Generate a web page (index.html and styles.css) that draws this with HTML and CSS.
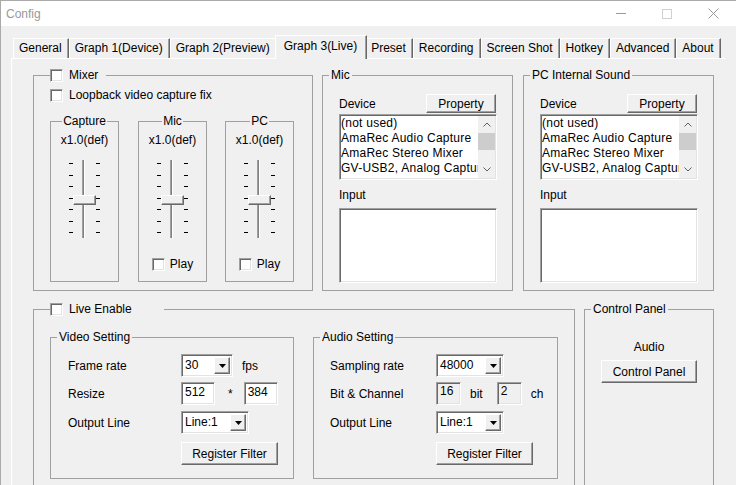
FILE: index.html
```html
<!DOCTYPE html>
<html lang="en">

<head>
  <meta charset="UTF-8">
  <title>Config</title>
  <link rel="stylesheet" href="styles.css">
</head>

<body>
  <div class="window">

    <div class="titlebar">
      <span class="title">Config</span>
      <span class="caption-btn"><svg width="10" height="1" viewBox="0 0 10 1"><rect width="10" height="1" fill="#999"/></svg></span>
      <span class="caption-btn"><svg width="10" height="10" viewBox="0 0 10 10"><rect x="0.5" y="0.5" width="9" height="9" fill="none" stroke="#d0d0d0"/></svg></span>
      <span class="caption-btn"><svg width="11" height="11" viewBox="0 0 11 11"><path d="M0.5 0.5L10.5 10.5M10.5 0.5L0.5 10.5" stroke="#999"/></svg></span>
    </div>

    <div class="client">
      <div class="tabs">
        <div class="tab">General</div>
        <div class="tab">Graph 1(Device)</div>
        <div class="tab">Graph 2(Preview)</div>
        <div class="tab active">Graph 3(Live)</div>
        <div class="tab">Preset</div>
        <div class="tab">Recording</div>
        <div class="tab">Screen Shot</div>
        <div class="tab">Hotkey</div>
        <div class="tab">Advanced</div>
        <div class="tab">About</div>
      </div>

      <div class="page">

        <div class="row-top">
          <fieldset class="group mixer">
            <legend class="check-legend">
              <label class="check-row"><input type="checkbox" class="check"> Mixer</label>
            </legend>
            <div class="mixer-body">
              <label class="check-row"><input type="checkbox" class="check"> Loopback video capture fix</label>

              <div class="faders">
                <fieldset class="group sub">
                  <legend class="sub-legend">Capture</legend>
                  <div class="gain">x1.0(def)</div>
                  <div class="slider">
                    <div class="ticks"><i></i><i></i><i></i><i></i><i></i><i></i><i></i></div>
                    <div class="track"></div>
                    <div class="ticks"><i></i><i></i><i></i><i></i><i></i><i></i><i></i></div>
                    <div class="thumb"></div>
                  </div>
                </fieldset>

                <fieldset class="group sub fader-mic">
                  <legend class="sub-legend">Mic</legend>
                  <div class="gain">x1.0(def)</div>
                  <div class="slider">
                    <div class="ticks"><i></i><i></i><i></i><i></i><i></i><i></i><i></i></div>
                    <div class="track"></div>
                    <div class="ticks"><i></i><i></i><i></i><i></i><i></i><i></i><i></i></div>
                    <div class="thumb"></div>
                  </div>
                  <label class="check-row play"><input type="checkbox" class="check"> Play</label>
                </fieldset>

                <fieldset class="group sub">
                  <legend class="sub-legend">PC</legend>
                  <div class="gain">x1.0(def)</div>
                  <div class="slider">
                    <div class="ticks"><i></i><i></i><i></i><i></i><i></i><i></i><i></i></div>
                    <div class="track"></div>
                    <div class="ticks"><i></i><i></i><i></i><i></i><i></i><i></i><i></i></div>
                    <div class="thumb"></div>
                  </div>
                  <label class="check-row play"><input type="checkbox" class="check"> Play</label>
                </fieldset>
              </div>
            </div>
          </fieldset>

          <fieldset class="group device">
            <legend>Mic</legend>
            <div class="device-body">
              <div class="device-head">
                <span>Device</span>
                <button class="btn property">Property</button>
              </div>
              <div class="listbox">
                <div class="items">
                  <div>(not used)</div>
                  <div>AmaRec Audio Capture</div>
                  <div>AmaRec Stereo Mixer</div>
                  <div>GV-USB2, Analog Capture</div>
                </div>
                <div class="scrollbar">
                  <div class="sb-arrow"><svg width="8" height="5" viewBox="0 0 8 5"><path d="M0.5 4.5L4 1L7.5 4.5" fill="none" stroke="#606060"/></svg></div>
                  <div class="sb-thumb"></div>
                  <div class="sb-track"></div>
                  <div class="sb-arrow"><svg width="8" height="5" viewBox="0 0 8 5"><path d="M0.5 0.5L4 4L7.5 0.5" fill="none" stroke="#606060"/></svg></div>
                </div>
              </div>
              <div class="input-label">Input</div>
              <div class="input-list"></div>
            </div>
          </fieldset>

          <fieldset class="group device">
            <legend>PC Internal Sound</legend>
            <div class="device-body">
              <div class="device-head">
                <span>Device</span>
                <button class="btn property">Property</button>
              </div>
              <div class="listbox">
                <div class="items">
                  <div>(not used)</div>
                  <div>AmaRec Audio Capture</div>
                  <div>AmaRec Stereo Mixer</div>
                  <div>GV-USB2, Analog Capture</div>
                </div>
                <div class="scrollbar">
                  <div class="sb-arrow"><svg width="8" height="5" viewBox="0 0 8 5"><path d="M0.5 4.5L4 1L7.5 4.5" fill="none" stroke="#606060"/></svg></div>
                  <div class="sb-thumb"></div>
                  <div class="sb-track"></div>
                  <div class="sb-arrow"><svg width="8" height="5" viewBox="0 0 8 5"><path d="M0.5 0.5L4 4L7.5 0.5" fill="none" stroke="#606060"/></svg></div>
                </div>
              </div>
              <div class="input-label">Input</div>
              <div class="input-list"></div>
            </div>
          </fieldset>
        </div>

        <div class="row-bottom">
          <fieldset class="group live">
            <legend class="check-legend live-legend">
              <label class="check-row"><input type="checkbox" class="check"> <span class="live-text">Live Enable</span></label>
            </legend>
            <div class="live-body">
              <fieldset class="group setting video">
                <legend>Video Setting</legend>
                <div class="setting-body">
                  <div class="field">
                    <span class="field-label">Frame rate</span>
                    <div class="combo small">
                      <span class="combo-value">30</span>
                      <span class="combo-btn"><svg width="7" height="4" viewBox="0 0 7 4"><path d="M0 0H7L3.5 4Z" fill="#000"/></svg></span>
                    </div>
                    <span class="unit">fps</span>
                  </div>
                  <div class="field">
                    <span class="field-label">Resize</span>
                    <span class="edit">512</span>
                    <span class="unit star">*</span>
                    <span class="edit second">384</span>
                  </div>
                  <div class="field third">
                    <span class="field-label">Output Line</span>
                    <div class="combo">
                      <span class="combo-value">Line:1</span>
                      <span class="combo-btn"><svg width="7" height="4" viewBox="0 0 7 4"><path d="M0 0H7L3.5 4Z" fill="#000"/></svg></span>
                    </div>
                  </div>
                  <div class="field last">
                    <span class="field-label"></span>
                    <button class="btn register">Register Filter</button>
                  </div>
                </div>
              </fieldset>

              <fieldset class="group setting audio">
                <legend>Audio Setting</legend>
                <div class="setting-body">
                  <div class="field">
                    <span class="field-label">Sampling rate</span>
                    <div class="combo">
                      <span class="combo-value">48000</span>
                      <span class="combo-btn"><svg width="7" height="4" viewBox="0 0 7 4"><path d="M0 0H7L3.5 4Z" fill="#000"/></svg></span>
                    </div>
                  </div>
                  <div class="field">
                    <span class="field-label">Bit &amp; Channel</span>
                    <span class="edit readonly">16</span>
                    <span class="unit">bit</span>
                    <span class="edit readonly channels">2</span>
                    <span class="unit">ch</span>
                  </div>
                  <div class="field third">
                    <span class="field-label">Output Line</span>
                    <div class="combo">
                      <span class="combo-value">Line:1</span>
                      <span class="combo-btn"><svg width="7" height="4" viewBox="0 0 7 4"><path d="M0 0H7L3.5 4Z" fill="#000"/></svg></span>
                    </div>
                  </div>
                  <div class="field last">
                    <span class="field-label"></span>
                    <button class="btn register">Register Filter</button>
                  </div>
                </div>
              </fieldset>
            </div>
          </fieldset>

          <fieldset class="group control">
            <legend>Control Panel</legend>
            <div class="control-body">
              <div>Audio</div>
              <button class="btn control-btn">Control Panel</button>
            </div>
          </fieldset>
        </div>

      </div>
    </div>
  </div>
</body>

</html>
```

FILE: styles.css
```css
* {
  box-sizing: border-box;
}

body {
  margin: 0;
  font-family: "Liberation Sans", Arial, sans-serif;
  font-size: 12px;
  line-height: 14px;
  color: #000;
  background: #fff;
}

.window {
  width: 736px;
  height: 485px;
  overflow: hidden;
  display: flex;
  flex-direction: column;
  border-top: 1px solid #aaa;
  border-left: 1px solid #aaa;
  background: #f0f0f0;
}

/* title bar */
.titlebar {
  height: 25px;
  flex: none;
  display: flex;
  align-items: center;
  background: #fff;
}

.title {
  flex: 1;
  padding-left: 5px;
  color: #999;
}

.caption-btn {
  width: 46px;
  height: 25px;
  display: flex;
  align-items: center;
  justify-content: center;
}

/* tabs */
.client {
  flex: 1;
  display: flex;
  flex-direction: column;
  padding-top: 9px;
}

.tabs {
  display: flex;
  align-items: flex-end;
  height: 23px;
  padding-left: 12px;
}

.tab {
  height: 20px;
  padding: 0 6px 0 5px;
  line-height: 19px;
  white-space: nowrap;
  border-top: 1px solid #fff;
  border-left: 1px solid #fff;
  border-right: 1px solid #696969;
  box-shadow: inset -1px 0 #a0a0a0;
}

.tab.active {
  height: 24px;
  margin: 0 -2px -1px;
  padding: 0 9px 0 8px;
  line-height: 20px;
  background: #f0f0f0;
  position: relative;
  z-index: 1;
}

.page {
  flex: 1;
  width: 714px;
  margin-left: 10px;
  padding: 9px 0 0 21px;
  border-top: 1px solid #fff;
  border-left: 1px solid #fff;
}

/* group boxes */
fieldset {
  margin: 0;
  padding: 0;
  min-width: 0;
  border: 1px solid #a0a0a0;
}

legend {
  height: 14px;
  margin-left: 6px;
  padding: 0 2px;
  line-height: 14px;
}

.row-top {
  display: flex;
  gap: 9px;
}

.mixer {
  width: 280px;
  height: 223px;
}

.device {
  width: 191px;
  height: 223px;
}

.device + .device {
  margin-left: 1px;
}

.check-row {
  display: flex;
  align-items: center;
  gap: 6px;
  height: 14px;
  white-space: nowrap;
}

.check {
  appearance: none;
  -webkit-appearance: none;
  flex: none;
  width: 13px;
  height: 13px;
  margin: 0;
  background: #fff;
  border: 1px solid;
  border-color: #a0a0a0 #fff #fff #a0a0a0;
  box-shadow: inset 1px 1px #696969, inset -1px -1px #e3e3e3;
}

.check-legend {
  padding: 0 8px 0 0;
  margin-left: 16px;
}

.live-legend {
  padding: 0;
}

.live-text {
  padding-right: 32px;
}

.mixer-body {
  padding: 6px 0 0 16px;
}

.faders {
  display: flex;
  gap: 18px;
  margin-top: 12px;
}

.sub {
  width: 69px;
  height: 168px;
}

.fader-mic {
  margin-left: 1px;
}

.sub-legend {
  margin: 0 auto;
  padding: 0 1px;
}

.gain {
  margin-top: 5px;
  text-align: center;
}

/* trackbar */
.slider {
  position: relative;
  display: flex;
  width: 31px;
  height: 78px;
  margin: 13px auto 0;
}

.ticks {
  width: 4px;
  display: flex;
  flex-direction: column;
  justify-content: space-between;
  padding: 3px 0 5px;
}

.ticks i {
  display: block;
  height: 1px;
  background: #000;
}

.track {
  width: 3px;
  margin: 0 11px 0 9px;
  background: #808080;
  border-left: 1px solid #a0a0a0;
  border-right: 1px solid #fff;
}

.thumb {
  position: absolute;
  top: 35px;
  left: 4px;
  width: 23px;
  height: 10px;
  background: #f0f0f0;
  border: 1px solid;
  border-color: #fff #696969 #696969 #fff;
  box-shadow: inset -1px -1px #a0a0a0;
}

.play {
  justify-content: center;
  gap: 5px;
  margin-top: 19px;
}

/* device lists */
.device-body {
  padding: 12px 15px 0 16px;
}

.device-head {
  display: flex;
  align-items: center;
  justify-content: space-between;
  height: 19px;
}

.btn {
  font: inherit;
  color: #000;
  padding: 0;
  background: #f0f0f0;
  border: 1px solid;
  border-color: #fff #696969 #696969 #fff;
  box-shadow: inset -1px -1px #a0a0a0;
  text-align: center;
}

.property {
  width: 70px;
  height: 19px;
  margin-right: 1px;
}

.listbox,
.input-list {
  background: #fff;
  border: 1px solid;
  border-color: #a0a0a0 #fff #fff #a0a0a0;
  box-shadow: inset 1px 1px #696969, inset -1px -1px #e3e3e3;
  padding: 1px;
}

.listbox {
  display: flex;
  height: 66px;
  margin-top: 1px;
}

.items {
  flex: 1;
  overflow: hidden;
  white-space: nowrap;
  letter-spacing: 0.25px;
}

.items div {
  height: 15px;
  line-height: 15px;
}

.scrollbar {
  width: 17px;
  flex: none;
  display: flex;
  flex-direction: column;
  background: #f0f0f0;
}

.sb-arrow {
  height: 17px;
  display: flex;
  align-items: center;
  justify-content: center;
}

.sb-thumb {
  height: 17px;
  background: #cdcdcd;
}

.sb-track {
  flex: 1;
}

.input-label {
  margin-top: 8px;
}

.input-list {
  height: 75px;
  margin-top: 6px;
}

/* live settings */
.row-bottom {
  display: flex;
  gap: 9px;
  margin-top: 11px;
}

.live {
  width: 542px;
  height: 200px;
}

.live-body {
  display: flex;
  gap: 19px;
  padding: 14px 0 0 16px;
}

.setting {
  height: 149px;
}

.video {
  width: 244px;
}

.audio {
  width: 245px;
}

.setting-body {
  display: flex;
  flex-direction: column;
  gap: 5px;
  padding: 10px 0 0 17px;
}

.audio .setting-body {
  padding-left: 16px;
}

.field {
  display: flex;
  align-items: center;
  height: 23px;
}

.field.third {
  margin-top: 1px;
}

.field.last {
  margin-top: 3px;
}

.field-label {
  width: 113px;
  flex: none;
}

.audio .field-label {
  width: 106px;
}

.combo {
  display: flex;
  width: 68px;
  height: 23px;
  padding: 2px;
  background: #fff;
  border: 1px solid;
  border-color: #a0a0a0 #fff #fff #a0a0a0;
  box-shadow: inset 1px 1px #696969, inset -1px -1px #e3e3e3;
}

.combo.small {
  width: 52px;
}

.combo-value {
  flex: 1;
  padding-left: 1px;
  line-height: 17px;
}

.combo-btn {
  width: 16px;
  display: flex;
  align-items: center;
  justify-content: center;
  background: #f0f0f0;
  border: 1px solid;
  border-color: #fff #696969 #696969 #fff;
  box-shadow: inset -1px -1px #a0a0a0;
}

.edit {
  width: 34px;
  height: 23px;
  padding-left: 3px;
  line-height: 19px;
  background: #fff;
  border: 1px solid;
  border-color: #a0a0a0 #fff #fff #a0a0a0;
  box-shadow: inset 1px 1px #696969, inset -1px -1px #e3e3e3;
}

.edit.readonly {
  width: 25px;
  background: #f0f0f0;
  line-height: 17px;
}

.unit {
  margin-left: 9px;
}

.star {
  margin-left: 13px;
}

.edit.second {
  margin-left: 11px;
}

.edit.channels {
  margin-left: 14px;
}

.register {
  width: 97px;
  height: 23px;
}

/* control panel */
.control {
  width: 130px;
  height: 200px;
}

.control-body {
  padding-top: 24px;
  text-align: center;
}

.control-btn {
  width: 96px;
  height: 23px;
  margin-top: 6px;
}
```
